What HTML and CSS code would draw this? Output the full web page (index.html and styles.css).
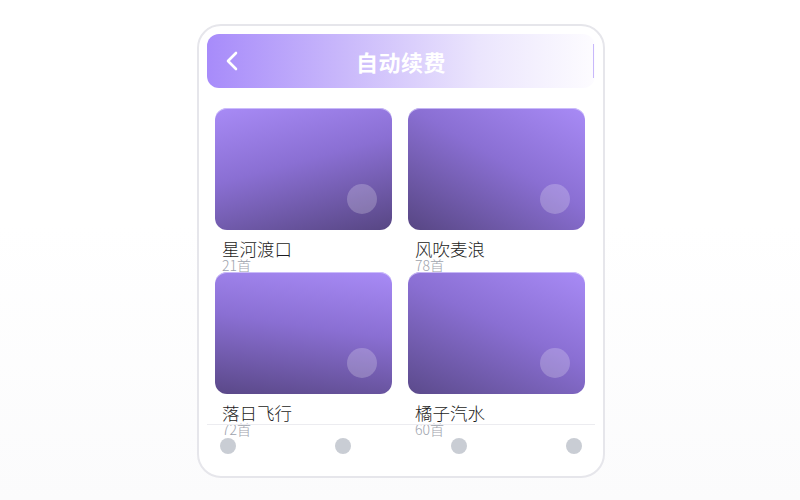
FILE: index.html
```html
<!DOCTYPE html>
<html lang="zh">

<head>
    <meta charset="UTF-8">
    <meta name="viewport" content="width=device-width, initial-scale=1.0">
    <title>自动续费</title>
    <link rel="stylesheet" href="styles.css">
</head>

<body>
    <div class="phone">
        <div class="header">
            <span class="back">
                <svg width="14" height="22" viewBox="0 0 14 22">
                    <path d="M11 3 L3 11 L11 19" fill="none" stroke="#fff" stroke-width="2.6" stroke-linecap="round" stroke-linejoin="round" />
                </svg>
            </span>
            <h1 class="title">自动续费</h1>
        </div>

        <div class="list">
            <div class="item">
                <div class="cover c1"><span class="dot"></span></div>
                <div class="name">星河渡口</div>
                <div class="count">21首</div>
            </div>
            <div class="item">
                <div class="cover c2"><span class="dot"></span></div>
                <div class="name">风吹麦浪</div>
                <div class="count">78首</div>
            </div>
            <div class="item">
                <div class="cover c3"><span class="dot"></span></div>
                <div class="name">落日飞行</div>
                <div class="count">72首</div>
            </div>
            <div class="item">
                <div class="cover c4"><span class="dot"></span></div>
                <div class="name">橘子汽水</div>
                <div class="count">60首</div>
            </div>
        </div>

        <div class="tabbar">
            <span class="tab"></span>
            <span class="tab"></span>
            <span class="tab"></span>
            <span class="tab"></span>
        </div>
    </div>
</body>

</html>
```

FILE: styles.css
```css
html,
body {
    margin: 0;
    height: 100%;
}

body {
    background: linear-gradient(180deg, #ffffff 0%, #ffffff 45%, #fbfbfc 100%);
    font-family: "Noto Sans CJK SC", "Noto Sans", sans-serif;
    display: flex;
    justify-content: center;
    padding-top: 24px;
    box-sizing: border-box;
}

.phone {
    position: relative;
    width: 408px;
    height: 454px;
    margin-left: 2px;
    box-sizing: border-box;
    border: 2px solid #e6e6eb;
    border-radius: 24px;
    background-color: #fff;
    padding: 8px;
    overflow: hidden;
}

.header {
    position: relative;
    height: 54px;
    border-radius: 12px;
    background: linear-gradient(90deg, #a78bfa 0%, #c9b8fb 35%, #ebe5fd 70%, #fdfcff 100%);
    display: flex;
    align-items: center;
    justify-content: center;
}

.header::after {
    content: "";
    position: absolute;
    right: 1px;
    top: 10px;
    width: 1px;
    height: 34px;
    background-color: #c8b8fb;
}

.back {
    position: absolute;
    left: 18px;
    top: 16px;
    display: flex;
}

.title {
    margin: 0;
    color: #fff;
    font-size: 22px;
    font-weight: 700;
    letter-spacing: 0.5px;
}

.list {
    display: grid;
    grid-template-columns: 177px 177px;
    grid-auto-rows: 164px;
    column-gap: 16px;
    padding: 20px 8px 0 8px;
}

.item {
    position: relative;
    height: 164px;
}

.cover {
    position: relative;
    height: 122px;
    border-radius: 12px;
    box-shadow: inset 0 1px 0 rgba(220, 210, 255, 0.7);
}

.c1 {
    background: linear-gradient(165deg, #a88bf6 0%, #8a6fd3 45%, #574683 100%);
}

.c2 {
    background: linear-gradient(210deg, #a88bf6 0%, #8a6fd3 45%, #574683 100%);
}

.c3 {
    background: linear-gradient(188deg, #a88bf6 0%, #8a6fd3 45%, #5a4888 100%);
}

.c4 {
    background: linear-gradient(205deg, #a88bf6 0%, #8a6fd3 45%, #5b4a8b 100%);
}

.dot {
    position: absolute;
    right: 15px;
    bottom: 16px;
    width: 30px;
    height: 30px;
    border-radius: 50%;
    background-color: rgba(255, 255, 255, 0.22);
}

.name {
    margin-top: 9px;
    padding-left: 7px;
    font-size: 17.5px;
    font-weight: 300;
    line-height: 20px;
    color: #1c1c22;
}

.count {
    padding-left: 7px;
    font-size: 14px;
    font-weight: 300;
    line-height: 13px;
    color: #9ea3ad;
}

.tabbar {
    position: absolute;
    left: 8px;
    right: 8px;
    bottom: 0;
    height: 52px;
    border-top: 1px solid #ececf0;
    display: flex;
    justify-content: space-between;
    padding: 13px 13px 0 13px;
    box-sizing: border-box;
}

.tab {
    width: 16px;
    height: 16px;
    border-radius: 50%;
    background-color: #c9cdd4;
}
```
